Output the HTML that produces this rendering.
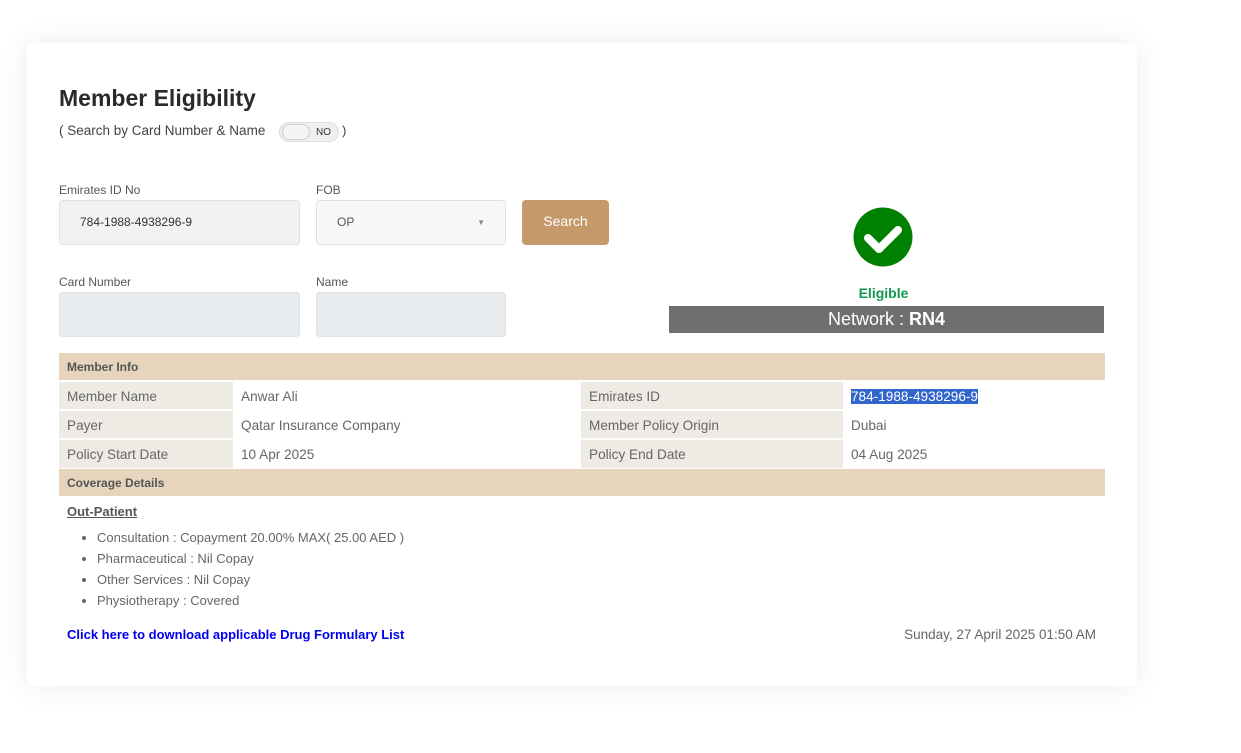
<!DOCTYPE html>
<html><head><meta charset="utf-8"><style>
*{margin:0;padding:0;box-sizing:border-box}
body{width:1241px;height:753px;background:#fff;font-family:"Liberation Sans",Roboto,sans-serif;position:relative;overflow:hidden;color:#666}
.card{position:absolute;left:27px;top:43px;width:1110px;height:643px;background:#fff;border-radius:4px;box-shadow:0 0 30px rgba(0,0,0,0.08)}
.a{position:absolute;white-space:nowrap}
.inp{position:absolute;border:1px solid #e0e0e0;border-radius:4px;font-size:12px;color:#333;padding-left:20px;line-height:43px}
.lab{position:absolute;font-size:12px;color:#555}
table{position:absolute;left:59px;top:353px;width:1046px;border-collapse:collapse;font-size:13.6px}
td{height:29px;padding:0 8px;color:#666;border-top:2px solid #fff;padding-top:1px}
.h td{background:#e6d5bc;font-size:12px;font-weight:bold;color:#555;height:28px;border:0}
.l{background:#eeebe4}
li{font-size:13px;color:#666;line-height:21px}
</style></head><body>
<div class="card"></div>
<div class="a" style="left:59px;top:85px;font-size:23px;font-weight:bold;color:#2a2a2a">Member Eligibility</div>
<div class="a" style="left:59px;top:123px;font-size:13.5px;color:#444">( Search by Card Number &amp; Name</div>
<div class="a" style="left:279px;top:122px;width:60px;height:20px;background:#f0f0f0;border-radius:10px;border:1px solid #ddd"></div>
<div class="a" style="left:282px;top:124px;width:28px;height:16px;background:#f5f5f5;border:1px solid #ccc;border-radius:8px"></div>
<div class="a" style="left:316px;top:127px;font-size:10px;color:#333">NO</div>
<div class="a" style="left:342px;top:123px;font-size:13px;color:#444">)</div>
<div class="lab" style="left:59px;top:183px">Emirates ID No</div>
<div class="inp" style="left:59px;top:200px;width:241px;height:45px;background:#f2f2f2">784-1988-4938296-9</div>
<div class="lab" style="left:316px;top:183px">FOB</div>
<div class="inp" style="left:316px;top:200px;width:190px;height:45px;background:#f7f7f7;color:#555">OP<span style="position:absolute;right:20px;top:0;font-size:8px;color:#888">▼</span></div>
<div class="a" style="left:522px;top:200px;width:87px;height:45px;background:#c5996a;border-radius:4px;color:#fff;font-size:14px;text-align:center;line-height:43px">Search</div>
<div class="lab" style="left:59px;top:275px">Card Number</div>
<div class="inp" style="left:59px;top:292px;width:241px;height:45px;background:#e8ebee"></div>
<div class="lab" style="left:316px;top:275px">Name</div>
<div class="inp" style="left:316px;top:292px;width:190px;height:45px;background:#e8ebee"></div>
<svg class="a" style="left:853px;top:207px" width="60" height="60" viewBox="0 0 60 60"><circle cx="30" cy="30" r="29.5" fill="#008000"/><path d="M15 31 L26 42 L45 23" stroke="#fff" stroke-width="8" fill="none" stroke-linecap="round" stroke-linejoin="round"/></svg>
<div class="a" style="left:666px;width:435px;top:285px;text-align:center;font-size:14px;font-weight:bold;color:#12994d">Eligible</div>
<div class="a" style="left:669px;top:306px;width:435px;height:27px;background:#6f6f6f;color:#fff;font-size:18px;text-align:center;line-height:27px">Network : <b>RN4</b></div>
<table>
<tr class="h"><td colspan="4">Member Info</td></tr>
<tr><td class="l" style="width:174px">Member Name</td><td style="width:348px">Anwar Ali</td><td class="l" style="width:262px">Emirates ID</td><td><span style="background:#3366cc;color:#fff">784-1988-4938296-9</span></td></tr>
<tr><td class="l">Payer</td><td>Qatar Insurance Company</td><td class="l">Member Policy Origin</td><td>Dubai</td></tr>
<tr><td class="l">Policy Start Date</td><td>10 Apr 2025</td><td class="l">Policy End Date</td><td>04 Aug 2025</td></tr>
<tr class="h"><td colspan="4" style="border-top:1px solid #fff">Coverage Details</td></tr>
</table>
<div class="a" style="left:67px;top:504px;font-size:13px;font-weight:bold;text-decoration:underline;color:#555">Out-Patient</div>
<ul class="a" style="left:97px;top:527px">
<li>Consultation : Copayment 20.00% MAX( 25.00 AED )</li>
<li>Pharmaceutical : Nil Copay</li>
<li>Other Services : Nil Copay</li>
<li>Physiotherapy : Covered</li>
</ul>
<div class="a" style="left:67px;top:627px;font-size:13px;font-weight:bold;color:#0000ee">Click here to download applicable Drug Formulary List</div>
<div class="a" style="right:145px;top:627px;font-size:13.5px;color:#666">Sunday, 27 April 2025 01:50 AM</div>
</body></html>
